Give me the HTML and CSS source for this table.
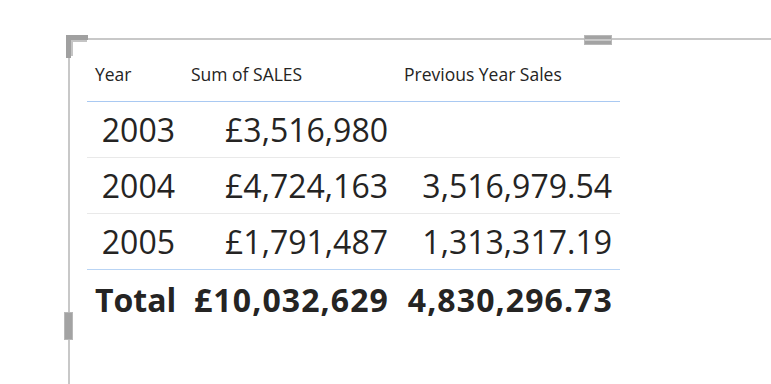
FILE: index.html
```html
<!DOCTYPE html>
<html>
<head>
<meta charset="utf-8">
<link rel="stylesheet" href="styles.css">
</head>
<body>
<div class="visual">
  <div class="corner"></div>
  <div class="handle-top"></div>
  <div class="handle-left"></div>
  <div class="table">
    <div class="row head">
      <div class="cell">Year</div>
      <div class="cell">Sum of SALES</div>
      <div class="cell">Previous Year Sales</div>
    </div>
    <div class="row data">
      <div class="cell num">2003</div>
      <div class="cell num">£3,516,980</div>
      <div class="cell num"></div>
    </div>
    <div class="row data">
      <div class="cell num">2004</div>
      <div class="cell num">£4,724,163</div>
      <div class="cell num">3,516,979.54</div>
    </div>
    <div class="row data last">
      <div class="cell num">2005</div>
      <div class="cell num">£1,791,487</div>
      <div class="cell num">1,313,317.19</div>
    </div>
    <div class="row total">
      <div class="cell num">Total</div>
      <div class="cell num wide">£10,032,629</div>
      <div class="cell num wide">4,830,296.73</div>
    </div>
  </div>
</div>
</body>
</html>
```

FILE: styles.css
```css
html, body {
  margin: 0;
  padding: 0;
  background: #ffffff;
}
body {
  width: 771px;
  height: 384px;
  overflow: hidden;
  font-family: "Open Sans", "Noto Sans", sans-serif;
  color: #252423;
}
.visual {
  position: relative;
  margin-left: 68px;
  margin-top: 38px;
  height: 329px;
  border-top: 2px solid #c8c8c8;
  border-left: 2px solid #c8c8c8;
  padding-left: 17px;
  padding-top: 15px;
}
.corner {
  position: absolute;
  left: -4px;
  top: -5px;
  width: 22px;
  height: 23px;
  border-top: 5px solid #a0a0a0;
  border-left: 5px solid #a0a0a0;
  box-sizing: border-box;
}
.corner::after {
  content: "";
  position: absolute;
  left: 0;
  top: 0;
  width: 14px;
  height: 14px;
  border-top: 2px solid #c4c4c4;
  border-left: 2px solid #c4c4c4;
}
.handle-top {
  position: absolute;
  left: 514px;
  top: -5px;
  width: 28px;
  height: 10px;
  box-sizing: border-box;
  background: #a3a3a3;
  border: 1px solid #b8b8b8;
}
.handle-top::after {
  content: "";
  position: absolute;
  left: 0;
  right: 0;
  top: 3px;
  height: 2px;
  background: #c8c8c8;
}
.handle-left {
  position: absolute;
  left: -6px;
  top: 272px;
  width: 9px;
  height: 28px;
  box-sizing: border-box;
  background: #a3a3a3;
  border: 1px solid #b8b8b8;
}
.table {
  width: 533px;
  display: flex;
  flex-direction: column;
}
.row {
  display: grid;
  grid-template-columns: 96px 213px 224px;
}
.head {
  height: 46px;
  border-bottom: 1px solid #a9c9f2;
  font-size: 17.5px;
  align-items: center;
}
.head .cell {
  padding: 0 8px;
  padding-bottom: 9px;
  white-space: nowrap;
}
.data {
  height: 55px;
  border-bottom: 1px solid #e9e9e9;
  font-size: 32px;
  align-items: center;
}
.data.last {
  border-bottom: 1px solid #b9d4f4;
}
.total {
  height: 58px;
  font-size: 32px;
  font-weight: 700;
  align-items: center;
  padding-bottom: 2px;
}
.num {
  text-align: right;
  padding: 0 8px;
  white-space: nowrap;
}
.wide {
  letter-spacing: 1.1px;
  padding-right: 7px;
}
```
